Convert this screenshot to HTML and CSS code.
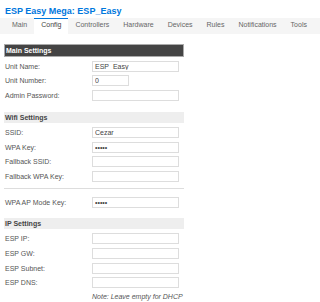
FILE: index.html
```html
<!DOCTYPE html>
<html>
<head>
<meta charset="utf-8">
<title>ESP Easy Mega: ESP_Easy</title>
<link rel="stylesheet" href="styles.css">
</head>
<body>
<h1 class="title">ESP Easy Mega: ESP_Easy</h1>
<nav class="menu">
  <a class="tab">Main</a>
  <a class="tab active">Config</a>
  <a class="tab">Controllers</a>
  <a class="tab">Hardware</a>
  <a class="tab">Devices</a>
  <a class="tab">Rules</a>
  <a class="tab">Notifications</a>
  <a class="tab">Tools</a>
</nav>
<form class="form">
  <div class="head dark">Main Settings</div>
  <div class="row"><label class="lbl">Unit Name:</label><input class="field" type="text" value="ESP_Easy"></div>
  <div class="row"><label class="lbl">Unit Number:</label><input class="field short" type="text" value="0"></div>
  <div class="row"><label class="lbl">Admin Password:</label><input class="field" type="password" value=""></div>

  <div class="head light">Wifi Settings</div>
  <div class="row"><label class="lbl">SSID:</label><input class="field" type="text" value="Cezar"></div>
  <div class="row"><label class="lbl">WPA Key:</label><input class="field" type="password" value="12345"></div>
  <div class="row"><label class="lbl">Fallback SSID:</label><input class="field" type="text" value=""></div>
  <div class="row"><label class="lbl">Fallback WPA Key:</label><input class="field" type="password" value=""></div>
  <div class="sep"></div>
  <div class="row"><label class="lbl">WPA AP Mode Key:</label><input class="field" type="password" value="12345"></div>

  <div class="head light">IP Settings</div>
  <div class="row"><label class="lbl">ESP IP:</label><input class="field" type="text" value=""></div>
  <div class="row"><label class="lbl">ESP GW:</label><input class="field" type="text" value=""></div>
  <div class="row"><label class="lbl">ESP Subnet:</label><input class="field" type="text" value=""></div>
  <div class="row"><label class="lbl">ESP DNS:</label><input class="field" type="text" value=""></div>
  <div class="note">Note: Leave empty for DHCP</div>
</form>
</body>
</html>
```

FILE: styles.css
```css
html, body {
  margin: 0;
  padding: 0;
  background: #fff;
  font-family: "Liberation Sans", Arial, sans-serif;
  color: #444;
}

.title {
  margin: 6px 0 2px 5px;
  font-size: 9px;
  line-height: 10px;
  font-weight: bold;
  color: #0077dd;
}

.menu {
  display: flex;
  background: #f5f5f5;
  padding-left: 5px;
  height: 16px;
}

.tab {
  display: block;
  padding: 0 7px 3px 7px;
  border-top: 1px solid transparent;
  font-size: 7px;
  line-height: 12px;
  color: #666;
  text-decoration: none;
}

.tab.active {
  background: #fff;
  border-top-color: #0077dd;
  color: #444;
}

.form {
  margin: 9.5px 0 0 4px;
  width: 180px;
}

.head {
  font-size: 7px;
  font-weight: bold;
  line-height: 11px;
  height: 11px;
  padding-left: 1px;
  margin: 8.9px 0 2.3px 0;
}

.head.dark {
  margin-top: 0;
  background: #444;
  color: #fff;
  border: 1px solid #aaa;
}

.head.light {
  background: #eee;
  color: #444;
}

.row {
  display: grid;
  grid-template-columns: 88px auto;
  align-items: center;
  height: 14.7px;
}

.lbl {
  font-size: 7px;
  padding-left: 1px;
  color: #555;
}

.field {
  box-sizing: border-box;
  width: 87px;
  height: 11px;
  margin: 0;
  padding: 0 2px;
  border: 1px solid #ddd;
  border-radius: 0;
  background: #fff;
  font-family: "Liberation Sans", Arial, sans-serif;
  font-size: 7px;
  line-height: 9px;
  color: #444;
  outline: none;
}

.field.short {
  width: 37px;
}

.sep {
  height: 1px;
  background: #ddd;
  margin: 4.7px 0 5.2px 0;
}

.note {
  margin: 2.4px 0 0 88px;
  font-size: 7px;
  line-height: 8px;
  font-style: italic;
  color: #555;
}
```
